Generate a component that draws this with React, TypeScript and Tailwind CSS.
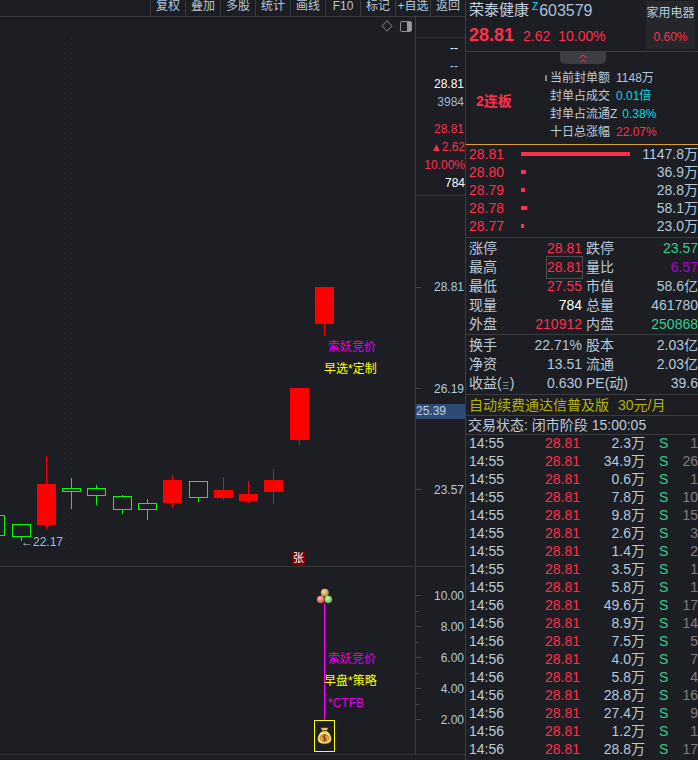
import React from "react";

const UP = "#ff0000";
const DOWN = "#00ff00";

// x, width, body top/bottom, wick top/bottom (page pixels)
const candles = [
  { x: -14, w: 18, top: 515, bottom: 535, hi: 515, lo: 535, up: false },
  { x: 12, w: 18, top: 524, bottom: 536, hi: 524, lo: 541, up: false },
  { x: 37, w: 19, top: 484, bottom: 525, hi: 456, lo: 529, up: true },
  { x: 62, w: 18, top: 488, bottom: 491, hi: 478, lo: 509, up: false },
  { x: 87, w: 18, top: 488, bottom: 495, hi: 485, lo: 505, up: false },
  { x: 113, w: 18, top: 496, bottom: 509, hi: 495, lo: 514, up: false },
  { x: 138, w: 18, top: 503, bottom: 509, hi: 499, lo: 520, up: false },
  { x: 163, w: 19, top: 480, bottom: 503, hi: 475, lo: 508, up: true },
  { x: 189, w: 18, top: 481, bottom: 497, hi: 481, lo: 502, up: false },
  { x: 214, w: 19, top: 490, bottom: 498, hi: 477, lo: 500, up: true },
  { x: 239, w: 19, top: 494, bottom: 501, hi: 481, lo: 503, up: true },
  { x: 264, w: 19, top: 480, bottom: 492, hi: 469, lo: 504, up: true },
  { x: 290, w: 19, top: 388, bottom: 440, hi: 388, lo: 445, up: true },
  { x: 315, w: 19, top: 287, bottom: 324, hi: 287, lo: 336, up: true },
];

const toolbar = ["复权", "叠加", "多股", "统计", "画线", "F10", "标记", "+自选", "返回"];

const book = [
  { price: "28.81", vol: "1147.8万", bar: 109 },
  { price: "28.80", vol: "36.9万", bar: 5 },
  { price: "28.79", vol: "28.8万", bar: 4 },
  { price: "28.78", vol: "58.1万", bar: 6 },
  { price: "28.77", vol: "23.0万", bar: 3 },
];

const trades = [
  ["14:55", "2.3万", "1"],
  ["14:55", "34.9万", "26"],
  ["14:55", "0.6万", "1"],
  ["14:55", "7.8万", "10"],
  ["14:55", "9.8万", "15"],
  ["14:55", "2.6万", "3"],
  ["14:55", "1.4万", "2"],
  ["14:55", "3.5万", "1"],
  ["14:55", "5.8万", "1"],
  ["14:56", "49.6万", "17"],
  ["14:56", "8.9万", "14"],
  ["14:56", "7.5万", "5"],
  ["14:56", "4.0万", "7"],
  ["14:56", "5.8万", "4"],
  ["14:56", "28.8万", "16"],
  ["14:56", "27.4万", "9"],
  ["14:56", "1.2万", "1"],
  ["14:56", "28.8万", "17"],
];

const Candles = () => (
  <svg className="absolute inset-0 h-full w-full" viewBox="0 17 415 549" shapeRendering="crispEdges">
    <line x1="71.5" y1="38" x2="71.5" y2="552" stroke="#303238" strokeDasharray="1 4" />
    {candles.map((c) => {
      const color = c.up ? UP : DOWN;
      const mid = c.x + Math.floor(c.w / 2) + 0.5;
      return (
        <g key={c.x}>
          <line x1={mid} y1={c.hi} x2={mid} y2={c.lo} stroke={color} />
          {c.up ? (
            <rect x={c.x} y={c.top} width={c.w} height={c.bottom - c.top} fill={color} />
          ) : (
            <rect x={c.x + 0.5} y={c.top + 0.5} width={c.w} height={c.bottom - c.top} fill="#1c1e23" stroke={color} />
          )}
        </g>
      );
    })}
  </svg>
);

const SignalChart = () => (
  <svg className="absolute inset-0 h-full w-full" viewBox="0 567 415 187">
    <defs>
      <radialGradient id="ballGold" cx="40%" cy="35%" r="70%">
        <stop offset="0%" stopColor="#f4e2a0" />
        <stop offset="100%" stopColor="#a8842c" />
      </radialGradient>
      <radialGradient id="ballRed" cx="40%" cy="35%" r="70%">
        <stop offset="0%" stopColor="#ffc0b8" />
        <stop offset="100%" stopColor="#d83a30" />
      </radialGradient>
      <radialGradient id="ballGreen" cx="40%" cy="35%" r="70%">
        <stop offset="0%" stopColor="#d8ffc8" />
        <stop offset="100%" stopColor="#46b030" />
      </radialGradient>
    </defs>
    <line x1="324.5" y1="603" x2="324.5" y2="720" stroke="#ff00ff" strokeWidth="1" />
    <circle cx="324.8" cy="592.8" r="4" fill="url(#ballGold)" />
    <circle cx="320.7" cy="599.5" r="3.8" fill="url(#ballRed)" />
    <circle cx="328.4" cy="599.5" r="3.8" fill="url(#ballGreen)" />
    <rect x="314.5" y="720.5" width="20" height="31" fill="none" stroke="#ffff00" />
    <path d="M320.500 727.500h8l-1.500 3.500h-5z" fill="#e8c060" stroke="#3a2408" strokeWidth="0.7" />
    <path d="M322 731c-3 2-4.500 5-4.500 8 0 3.500 3 5 7 5s7-1.500 7-5c0-3-1.500-6-4.500-8z" fill="#f8e878" stroke="#4a3008" strokeWidth="0.8" />
    <ellipse cx="324.500" cy="738" rx="4.500" ry="3.800" fill="#e8a848" stroke="#9a5a18" strokeWidth="0.6" />
    <path d="M326.300 736.200c-.8-.8-3.600-.8-3.600.7s3.600.7 3.600 2.200-2.800 1.500-3.600.7M324.500 734.500v7" fill="none" stroke="#6a3010" strokeWidth="0.8" />
  </svg>
);

const Stat = ({ label, value, color = "text-[#b4c8dc]", boxed = false }: { label: React.ReactNode; value: string; color?: string; boxed?: boolean }) => (
  <div className="flex h-[19px] items-center pt-px">
    <span className="whitespace-nowrap text-[#bccbd9]">{label}</span>
    <span className={`ml-auto whitespace-nowrap ${color} ${boxed ? "outline outline-1 outline-[#4a4c50]" : ""}`}>{value}</span>
  </div>
);

export default function App() {
  return (
    <div
      className="flex h-[760px] w-[698px] overflow-hidden bg-[#1c1e23] text-[14px] text-[#b4c8dc]"
      style={{ fontFamily: '"Liberation Sans", "Noto Sans CJK SC", sans-serif' }}
    >
      {/* left: chart */}
      <div className="flex w-[466px] shrink-0 flex-col border-r border-[#3a3c40]">
        <div className="flex h-[17px] shrink-0 justify-end border-b border-[#3a3c40]">
          {toolbar.map((t) => (
            <div key={t} className="flex h-4 w-[35px] justify-center whitespace-nowrap border-l border-[#3a3c40] text-[12px] leading-[12px] text-[#b4c8dc]">
              {t}
            </div>
          ))}
        </div>

        <div className="flex h-[550px] shrink-0 border-b border-[#32343a]">
          <div className="relative flex-1">
            <Candles />
            <div className="absolute left-[382px] top-[4px] h-[8px] w-[8px] translate-x-[1px] translate-y-[1px] rotate-45 border border-[#6a6c70]" />
            <div className="absolute left-[400px] top-[4px] flex h-[11px] w-[12px] justify-end rounded-[2px] border border-[#8a8c90]">
              <div className="w-[4px] bg-[#9a9ca0]" />
            </div>
            <div className="absolute left-[328px] top-[322px] text-[12px] leading-4 text-[#e000f0]">索妖竞价</div>
            <div className="absolute left-[324px] top-[344px] text-[12px] leading-4 text-[#ffff00]">早选*定制</div>
            <div className="absolute left-[21px] top-[517px] text-[12px] leading-4 text-[#9dbbe0]">←22.17</div>
            <div className="absolute left-[292px] top-[535px] flex h-[13px] w-[13px] items-center justify-center rounded-[1px] bg-[#7a0000] text-[11px] leading-none text-white">张</div>
          </div>
          <div className="flex w-[50px] shrink-0 flex-col border-l border-[#3a3c40] text-right text-[12px]">
            <div className="mb-px h-[21px] shrink-0 border-b border-[#32343a]" />
            <div className="h-[18px] pr-[7px] leading-[18px] text-white">--</div>
            <div className="h-[18px] pr-[7px] leading-[18px] text-[#b4c8dc]">--</div>
            <div className="h-[18px] pr-px leading-[18px] text-white">28.81</div>
            <div className="h-[18px] pr-px leading-[18px] text-[#9db8d8]">3984</div>
            <div className="mt-[9px] h-[18px] pr-px leading-[18px] text-[#ff2f4b]">28.81</div>
            <div className="h-[18px] whitespace-nowrap leading-[18px] text-[#ff2f4b]">
              <span className="text-[11px]">▲</span>2.62
            </div>
            <div className="h-[18px] leading-[18px] text-[#ff2f4b]">10.00%</div>
            <div className="h-[18px] leading-[18px] text-white">784</div>
            <div className="relative mt-[3px] flex-1 border-t border-[#32343a] text-[#b4c8dc]">
              <div className="absolute right-[1px] top-[83px] leading-4">28.81</div>
              <div className="absolute right-[1px] top-[185px] leading-4">26.19</div>
              <div className="absolute right-[1px] top-[286px] leading-4">23.57</div>
              <div className="absolute left-0 right-0 top-[208px] h-[15px] bg-[#2f4b74] text-left leading-[15px] text-[#bcd0e8]">25.39</div>
              <div className="absolute left-0 top-[91px] h-px w-[5px] bg-[#44464c]" />
              <div className="absolute left-0 top-[192px] h-px w-[5px] bg-[#44464c]" />
              <div className="absolute left-0 top-[293px] h-px w-[5px] bg-[#44464c]" />
            </div>
          </div>
        </div>

        <div className="flex h-[188px] shrink-0 border-b border-[#32343a]">
          <div className="relative flex-1">
            <SignalChart />
            <div className="absolute left-[328px] top-[84px] text-[12px] leading-4 text-[#e000f0]">索妖竞价</div>
            <div className="absolute left-[324px] top-[106px] text-[12px] leading-4 text-[#ffff00]">早盘*策略</div>
            <div className="absolute left-[328px] top-[128px] text-[12px] leading-4 text-[#e000f0]">*CTFB</div>
          </div>
          <div className="relative w-[50px] shrink-0 border-l border-[#3a3c40] text-[12px] text-[#b4c8dc]">
            {[
              ["10.00", "top-[21px]"],
              ["8.00", "top-[52px]"],
              ["6.00", "top-[83px]"],
              ["4.00", "top-[114px]"],
              ["2.00", "top-[145px]"],
            ].map(([v, top]) => (
              <div key={v} className={`absolute right-[1px] leading-4 ${top}`}>{v}</div>
            ))}
            <div className="absolute left-0 top-[28px] h-px w-[5px] bg-[#44464c]" />
            <div className="absolute left-0 top-[44px] h-px w-[3px] bg-[#44464c]" />
            <div className="absolute left-0 top-[59px] h-px w-[5px] bg-[#44464c]" />
            <div className="absolute left-0 top-[75px] h-px w-[3px] bg-[#44464c]" />
            <div className="absolute left-0 top-[90px] h-px w-[5px] bg-[#44464c]" />
            <div className="absolute left-0 top-[106px] h-px w-[3px] bg-[#44464c]" />
            <div className="absolute left-0 top-[121px] h-px w-[5px] bg-[#44464c]" />
            <div className="absolute left-0 top-[137px] h-px w-[3px] bg-[#44464c]" />
            <div className="absolute left-0 top-[152px] h-px w-[5px] bg-[#44464c]" />
          </div>
        </div>
      </div>

      {/* right: quote panel */}
      <div className="flex w-[232px] shrink-0 flex-col">
        <div className="flex h-[52px] shrink-0 border-b border-[#3a3c40]">
          <div className="flex-1 pl-[3px]">
            <div className="flex h-[21px] items-center whitespace-nowrap text-[15px] text-[#c0d0e0]">
              荣泰健康
              <span className="-mt-2 ml-[3px] mr-[1px] text-[10px] leading-none text-[#00e6f0]">Z</span>
              <span className="text-[16px] text-[#a8c0dc]">603579</span>
            </div>
            <div className="mt-[1px] flex items-baseline whitespace-nowrap text-[#ff2f4b]">
              <span className="text-[18px] font-bold">28.81</span>
              <span className="ml-[9px]">2.62</span>
              <span className="ml-[8px]">10.00%</span>
            </div>
          </div>
          <div className="mr-[3px] mt-[1px] flex h-[48px] w-[49px] flex-col items-center bg-[#25272c] text-[12px] whitespace-nowrap">
            <span className="mt-[5px] leading-[15px] text-[#bccbd9]">家用电器</span>
            <span className="mt-[9px] leading-[15px] text-[#f0364f]">0.60%</span>
          </div>
        </div>

        <div className="relative flex h-[93px] shrink-0 border-b border-[#e0a030] text-[12px]">
          <div className="absolute left-[94px] top-0 flex h-[12px] w-[46px] items-center justify-center rounded-b-[5px] bg-[#3c3e44]">
            <svg width="10" height="9" viewBox="0 0 10 9" fill="none" stroke="#ff2f4b" strokeWidth="1">
              <path d="M1 4l4-3 4 3" />
              <path d="M2.500 8l2.500-2 2.500 2" />
            </svg>
          </div>
          <div className="flex w-[84px] shrink-0 items-center pl-[10px]">
            <span className="mt-[6px] text-[14px] font-bold text-[#ff2f4b]">2连板</span>
          </div>
          <div className="flex flex-col pt-[17px]">
            <div className="flex h-[18px] items-center whitespace-nowrap">
              <span className="text-[#bccbd9]">当前封单额</span>
              <span className="ml-[6px]">1148万</span>
            </div>
            <div className="flex h-[18px] items-center whitespace-nowrap">
              <span className="text-[#bccbd9]">封单占成交</span>
              <span className="ml-[6px] text-[#00d8e8]">0.01倍</span>
            </div>
            <div className="flex h-[18px] items-center whitespace-nowrap">
              <span className="text-[#bccbd9]">封单占流通Z</span>
              <span className="ml-[5px] text-[#00d8e8]">0.38%</span>
            </div>
            <div className="flex h-[18px] items-center whitespace-nowrap">
              <span className="text-[#bccbd9]">十日总涨幅</span>
              <span className="ml-[6px] text-[#ff2f4b]">22.07%</span>
            </div>
          </div>
          <div className="absolute left-[79px] top-[23px] h-[6px] w-[2px] rounded-t-[1px] bg-[#8a8c90]" />
        </div>

        <div className="h-[93px] shrink-0 border-b border-[#3a3c40]">
          {book.map((b) => (
            <div key={b.price} className="flex h-[18px] items-center pl-[3px]">
              <span className="w-[52px] text-[#ff2f4b]">{b.price}</span>
              <div className="h-[4px] bg-[#ff2f4b]" style={{ width: b.bar }} />
              <span className="ml-auto whitespace-nowrap">{b.vol}</span>
            </div>
          ))}
        </div>

        <div className="shrink-0 border-b border-[#3a3c40] pl-[3px] pb-px">
          <div className="grid grid-cols-[113px_112px] gap-x-[4px]">
            <div>
              <Stat label="涨停" value="28.81" color="text-[#ff2f4b]" />
              <Stat label="最高" value="28.81" color="text-[#ff2f4b]" boxed />
              <Stat label="最低" value="27.55" color="text-[#ff2f4b]" />
              <Stat label="现量" value="784" color="text-white" />
              <Stat label="外盘" value="210912" color="text-[#ff2f4b]" />
            </div>
            <div>
              <Stat label="跌停" value="23.57" color="text-[#35cf8f]" />
              <Stat label="量比" value="6.57" color="text-[#b000d0]" />
              <Stat label="市值" value="58.6亿" />
              <Stat label="总量" value="461780" />
              <Stat label="内盘" value="250868" color="text-[#35cf8f]" />
            </div>
          </div>
        </div>

        <div className="shrink-0 border-b border-[#3a3c40] pl-[3px] pb-[2px]">
          <div className="grid grid-cols-[113px_112px] gap-x-[4px]">
            <div>
              <Stat label="换手" value="22.71%" />
              <Stat label="净资" value="13.51" />
              <Stat
                label={
                  <>
                    收益(<span className="text-[8px]">三</span>)
                  </>
                }
                value="0.630"
              />
            </div>
            <div>
              <Stat label="股本" value="2.03亿" />
              <Stat label="流通" value="2.03亿" />
              <Stat label="PE(动)" value="39.6" />
            </div>
          </div>
        </div>

        <div className="flex h-[21px] shrink-0 items-center whitespace-nowrap border-b border-[#3a3c40] pl-[3px] text-[#b4b400]">
          自动续费通达信普及版<span className="ml-[9px]">30元/月</span>
        </div>
        <div className="flex h-[19px] shrink-0 items-center whitespace-nowrap border-b border-[#3a3c40] pl-[2px] text-[#bccbd9]">
          交易状态: 闭市阶段 15:00:05
        </div>

        <div className="-mt-px">
          {trades.map(([time, vol, count], i) => (
            <div key={i} className="flex h-[18px] items-center pl-[3px] whitespace-nowrap">
              <span className="w-[76px] shrink-0 text-[#bccbd9]">{time}</span>
              <span className="w-[34px] shrink-0 text-right text-[#ff2f4b]">28.81</span>
              <span className="w-[66px] shrink-0 text-right">{vol}</span>
              <span className="ml-[14px] w-[10px] shrink-0 text-[#35cf8f]">S</span>
              <span className="w-[29px] shrink-0 text-right text-[#7c7e82]">{count}</span>
            </div>
          ))}
        </div>
      </div>
    </div>
  );
}
